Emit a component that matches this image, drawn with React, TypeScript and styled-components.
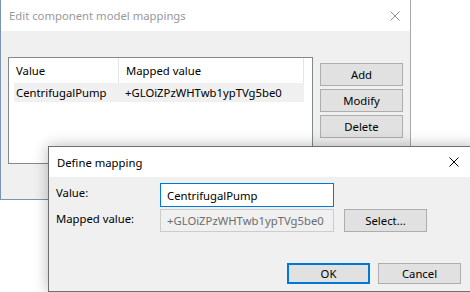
import React from "react";
import styled, { createGlobalStyle } from "styled-components";

const Global = createGlobalStyle`
  html, body { margin: 0; padding: 0; background: #ffffff; }
  body { font-family: "Noto Sans", "Open Sans", sans-serif; font-size: 11.3px; color: #000; }
  * { box-sizing: border-box; }
`;

const Desktop = styled.div`
  position: relative;
  width: 470px;
  height: 292px;
  overflow: hidden;
  background: #ffffff;
`;

const Window = styled.div`
  width: 411px;
  height: 200px;
  display: flex;
  flex-direction: column;
  border-right: 1px solid #aaaaaa;
  border-left: 1px solid #7b93b3;
  border-bottom: 1px solid #7b93b3;
`;

const TitleBar = styled.div<{ $active?: boolean }>`
  height: ${(p) => (p.$active ? "30px" : "31px")};
  flex: none;
  display: flex;
  align-items: center;
  justify-content: space-between;
  background: #ffffff;
  padding-left: 8px;
  padding-right: ${(p) => (p.$active ? "20px" : "10px")};
  color: ${(p) => (p.$active ? "#000000" : "#999999")};
`;

const CloseGlyph = ({ color }: { color: string }) => (
  <svg width="10" height="10" viewBox="0 0 10 10">
    <path d="M0.5 0.5 L9.5 9.5 M9.5 0.5 L0.5 9.5" stroke={color} strokeWidth="1" fill="none" />
  </svg>
);

const Body = styled.div`
  flex: 1;
  background: #f0f0f0;
  display: flex;
  align-items: flex-start;
  padding: 26px 0 0 7px;
  gap: 7px;
`;

const ListBox = styled.div`
  width: 305px;
  height: 107px;
  background: #ffffff;
  border: 1px solid #828790;
  display: flex;
  flex-direction: column;
`;

const HeaderRow = styled.div`
  height: 25px;
  display: flex;
  align-items: stretch;
`;

const HeaderCell = styled.div<{ $w: number }>`
  width: ${(p) => p.$w}px;
  display: flex;
  align-items: center;
  padding-left: 7px;
  border-right: 1px solid #e5e5e5;
`;

const DataRow = styled.div`
  margin-left: 5px;
  width: 290px;
  height: 19px;
  display: flex;
  align-items: center;
  background: #f0f0f0;
`;

const DataCell = styled.div<{ $w: number }>`
  width: ${(p) => p.$w}px;
  padding-left: 2px;
  white-space: nowrap;
`;

const ButtonColumn = styled.div`
  display: flex;
  flex-direction: column;
  gap: 3px;
  margin-top: 6px;
`;

const Button = styled.button<{ $default?: boolean; $h?: number }>`
  width: 83px;
  height: ${(p) => p.$h ?? 23}px;
  padding: 0;
  background: #e1e1e1;
  border: ${(p) => (p.$default ? "2px solid #0078d7" : "1px solid #adadad")};
  font-family: inherit;
  font-size: 11.3px;
  color: #000;
  display: flex;
  align-items: center;
  justify-content: center;
`;

const Dialog = styled.div`
  position: absolute;
  left: 48px;
  top: 146px;
  width: 432px;
  height: 146px;
  border: 1px solid #6e6e6e;
  background: #f0f0f0;
  display: flex;
  flex-direction: column;
  box-shadow: 0 0 14px rgba(0, 0, 0, 0.28);
`;

const DialogBody = styled.div`
  flex: 1;
  display: grid;
  grid-template-columns: 94px 174px 83px;
  grid-template-rows: 24px 23px;
  column-gap: 10px;
  row-gap: 2px;
  padding: 6px 0 0 7px;
  align-content: start;
`;

const Label = styled.div`
  padding-top: 2px;
  white-space: nowrap;
`;

const Field = styled.div<{ $disabled?: boolean }>`
  border: 1px solid ${(p) => (p.$disabled ? "#cccccc" : "#0078d7")};
  background: ${(p) => (p.$disabled ? "#f0f0f0" : "#ffffff")};
  color: ${(p) => (p.$disabled ? "#6d6d6d" : "#000000")};
  padding-left: 6px;
  display: flex;
  align-items: center;
  white-space: nowrap;
  overflow: hidden;
`;

const Footer = styled.div`
  display: flex;
  justify-content: flex-end;
  gap: 8px;
  padding: 0 18px 7px 0;
`;

export default function App() {
  return (
    <>
      <Global />
      <Desktop>
        <Window>
          <TitleBar>
            <span>Edit component model mappings</span>
            <CloseGlyph color="#8c8c8c" />
          </TitleBar>
          <Body>
            <ListBox>
              <HeaderRow>
                <HeaderCell $w={110}>Value</HeaderCell>
                <HeaderCell $w={185}>Mapped value</HeaderCell>
              </HeaderRow>
              <DataRow>
                <DataCell $w={109}>CentrifugalPump</DataCell>
                <DataCell $w={181}>+GLOiZPzWHTwb1ypTVg5be0</DataCell>
              </DataRow>
            </ListBox>
            <ButtonColumn>
              <Button>Add</Button>
              <Button>Modify</Button>
              <Button>Delete</Button>
            </ButtonColumn>
          </Body>
        </Window>
        <Dialog>
          <TitleBar $active>
            <span>Define mapping</span>
            <CloseGlyph color="#000000" />
          </TitleBar>
          <DialogBody>
            <Label>Value:</Label>
            <Field>CentrifugalPump</Field>
            <span />
            <Label>Mapped value:</Label>
            <Field $disabled>+GLOiZPzWHTwb1ypTVg5be0</Field>
            <Button>Select...</Button>
          </DialogBody>
          <Footer>
            <Button $default $h={21}>OK</Button>
            <Button $h={21}>Cancel</Button>
          </Footer>
        </Dialog>
      </Desktop>
    </>
  );
}
